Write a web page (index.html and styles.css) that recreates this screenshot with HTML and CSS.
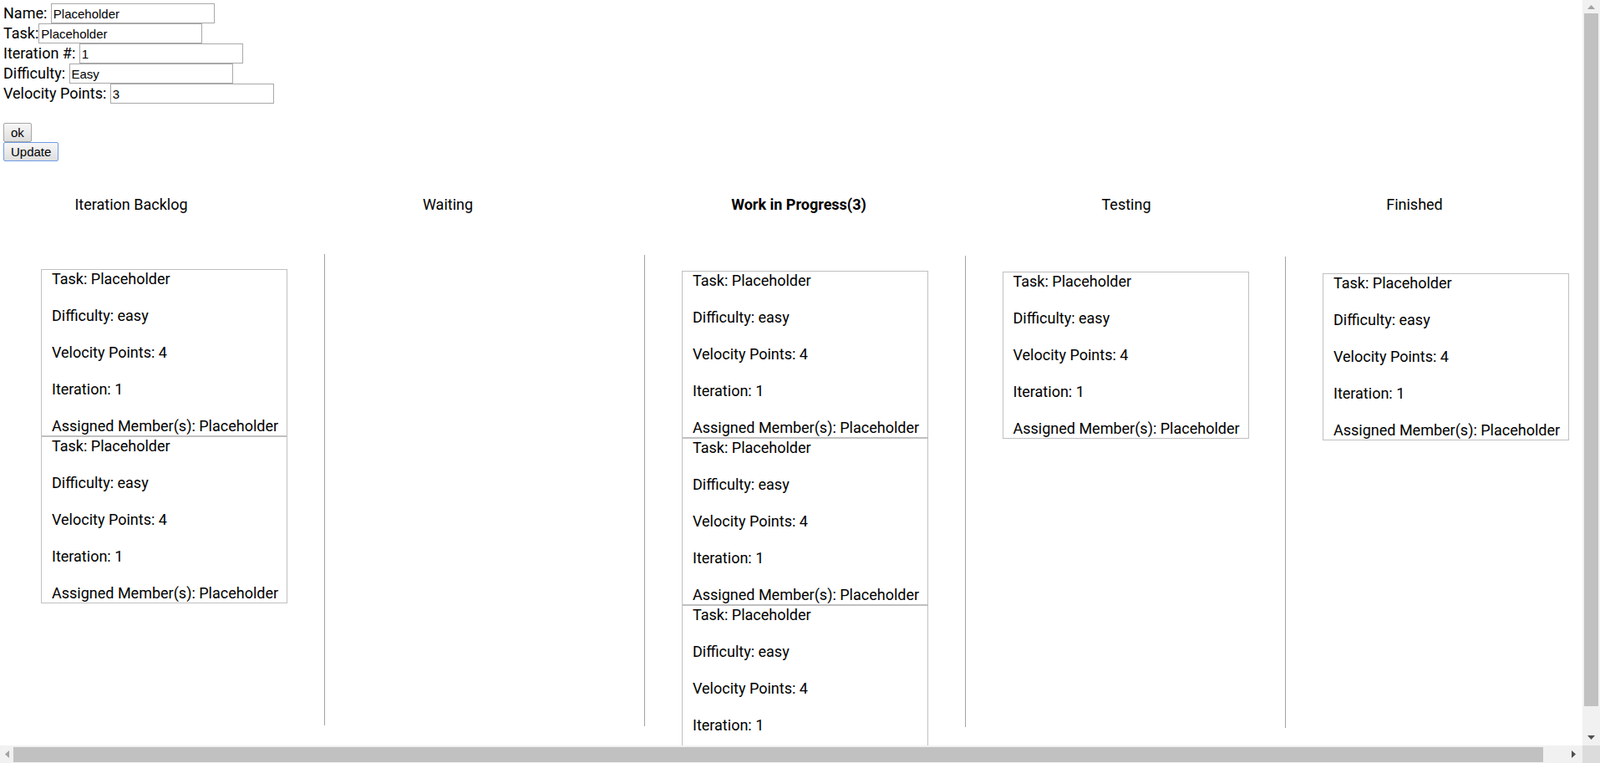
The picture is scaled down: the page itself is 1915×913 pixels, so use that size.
FILE: index.html
```html
<!DOCTYPE html>
<html>
<head>
<meta charset="utf-8">
<title>Scrum Board</title>
<link rel="stylesheet" href="styles.css">
</head>
<body>
<form class="entry">
  <div class="field">Name: <input class="text-in" type="text" value="Placeholder"></div>
  <div class="field">Task:<input class="text-in" type="text" value="Placeholder"></div>
  <div class="field">Iteration #: <input class="text-in" type="text" value="1"></div>
  <div class="field">Difficulty: <input class="text-in" type="text" value="Easy"></div>
  <div class="field">Velocity Points: <input class="text-in" type="text" value="3"></div>
  <div class="actions">
    <button class="btn" type="button">ok</button>
    <button class="btn btn-focus" type="button">Update</button>
  </div>
</form>

<div class="board-head">
  <div class="head h1">Iteration Backlog</div>
  <div class="head h2">Waiting</div>
  <div class="head h3 head-bold">Work in Progress(3)</div>
  <div class="head h4">Testing</div>
  <div class="head h5">Finished</div>
</div>

<div class="board">
  <div class="col c1">
    <div class="card">
      <div class="line">Task: Placeholder</div>
      <div class="line">Difficulty: easy</div>
      <div class="line">Velocity Points: 4</div>
      <div class="line">Iteration: 1</div>
      <div class="line">Assigned Member(s): Placeholder</div>
    </div>
    <div class="card">
      <div class="line">Task: Placeholder</div>
      <div class="line">Difficulty: easy</div>
      <div class="line">Velocity Points: 4</div>
      <div class="line">Iteration: 1</div>
      <div class="line">Assigned Member(s): Placeholder</div>
    </div>
  </div>
  <div class="col c2"></div>
  <div class="col c3">
    <div class="card">
      <div class="line">Task: Placeholder</div>
      <div class="line">Difficulty: easy</div>
      <div class="line">Velocity Points: 4</div>
      <div class="line">Iteration: 1</div>
      <div class="line">Assigned Member(s): Placeholder</div>
    </div>
    <div class="card">
      <div class="line">Task: Placeholder</div>
      <div class="line">Difficulty: easy</div>
      <div class="line">Velocity Points: 4</div>
      <div class="line">Iteration: 1</div>
      <div class="line">Assigned Member(s): Placeholder</div>
    </div>
    <div class="card">
      <div class="line">Task: Placeholder</div>
      <div class="line">Difficulty: easy</div>
      <div class="line">Velocity Points: 4</div>
      <div class="line">Iteration: 1</div>
      <div class="line">Assigned Member(s): Placeholder</div>
    </div>
  </div>
  <div class="col c4">
    <div class="card">
      <div class="line">Task: Placeholder</div>
      <div class="line">Difficulty: easy</div>
      <div class="line">Velocity Points: 4</div>
      <div class="line">Iteration: 1</div>
      <div class="line">Assigned Member(s): Placeholder</div>
    </div>
  </div>
  <div class="col c5">
    <div class="card">
      <div class="line">Task: Placeholder</div>
      <div class="line">Difficulty: easy</div>
      <div class="line">Velocity Points: 4</div>
      <div class="line">Iteration: 1</div>
      <div class="line">Assigned Member(s): Placeholder</div>
    </div>
  </div>
</div>

<div class="vscroll" aria-hidden="true">
  <div class="sb-btn sb-up">
    <svg width="9" height="5" viewBox="0 0 9 5"><polygon points="4.5,0 9,5 0,5" fill="#a3a3a3"/></svg>
  </div>
  <div class="vthumb"></div>
  <div class="sb-fill"></div>
  <div class="sb-btn sb-down">
    <svg width="9" height="5" viewBox="0 0 9 5"><polygon points="0,0 9,0 4.5,5" fill="#505050"/></svg>
  </div>
</div>
<div class="hscroll" aria-hidden="true">
  <div class="sb-btn sb-left">
    <svg width="5" height="9" viewBox="0 0 5 9"><polygon points="5,0 5,9 0,4.5" fill="#a3a3a3"/></svg>
  </div>
  <div class="hthumb"></div>
  <div class="sb-fill"></div>
  <div class="sb-btn sb-right">
    <svg width="5" height="9" viewBox="0 0 5 9"><polygon points="0,0 5,4.5 0,9" fill="#505050"/></svg>
  </div>
</div>
<div class="sb-corner" aria-hidden="true"></div>
</body>
</html>
```
FILE: styles.css
```css
html {
  overflow: hidden;
  background: #ffffff;
}
body {
  margin: 4px;
  font-family: Roboto, "Liberation Sans", sans-serif;
  font-size: 18px;
  line-height: 22px;
  color: #000;
}
.entry {
  margin: 0;
}
.field {
  height: 24px;
  display: flex;
  align-items: baseline;
  white-space: pre;
}
.text-in {
  box-sizing: border-box;
  width: 196px;
  height: 24px;
  margin: 0;
  padding: 0 2px;
  border: 1px solid #a9a9a9;
  border-radius: 0;
  font-family: "Liberation Sans", Arial, sans-serif;
  font-size: 15px;
  color: #000;
  background: #fff;
  outline: none;
}
.actions {
  margin-top: 23px;
}
.btn {
  display: block;
  box-sizing: border-box;
  height: 23px;
  margin: 0;
  padding: 0 8px;
  border: 1px solid #a6a6a6;
  border-radius: 2px;
  background: linear-gradient(#f7f7f7, #dedede);
  font-family: "Liberation Sans", Arial, sans-serif;
  font-size: 15px;
  line-height: 20px;
  color: #000;
}
.btn-focus {
  border-color: #6f9ce6;
}
.board-head {
  display: flex;
  margin-top: 41px;
}
.head {
  flex: none;
  text-align: center;
  white-space: nowrap;
}
.h1 { width: 306px; }
.h2 { width: 452px; }
.h3 { width: 388px; }
.h4 { width: 396px; }
.h5 { width: 294px; }
.head-bold {
  font-weight: bold;
}
.board {
  display: flex;
  align-items: flex-start;
  margin-top: 48px;
  padding-bottom: 56px;
}
.col {
  flex: none;
  box-sizing: border-box;
  width: 383.5px;
  height: 564px;
  border-left: 1px solid #a3a3a3;
  padding-left: 44px;
  padding-top: 18px;
}
.c1 { border-left-color: transparent; }
.c3 { margin-top: 1px; padding-top: 19px; }
.c4 { margin-top: 2px; padding-top: 19px; }
.c5 { margin-top: 3px; padding-top: 20px; width: 388px; }
.card {
  box-sizing: border-box;
  width: 295px;
  border: 1px solid #c0c0c0;
  padding: 0 8px 0 12px;
  white-space: nowrap;
}
.line + .line {
  margin-top: 22px;
}

/* scrollbars drawn over the page edge */
.vscroll {
  position: fixed;
  top: 0;
  right: 0;
  width: 21px;
  height: calc(100% - 21px);
  background: #f1f1f1;
  display: flex;
  flex-direction: column;
}
.hscroll {
  position: fixed;
  left: 0;
  bottom: 0;
  height: 21px;
  width: calc(100% - 21px);
  background: #f1f1f1;
  display: flex;
}
.sb-corner {
  position: fixed;
  right: 0;
  bottom: 0;
  width: 21px;
  height: 21px;
  background: #dcdcdc;
}
.sb-btn {
  flex: none;
  display: flex;
  align-items: center;
  justify-content: center;
}
.sb-btn svg {
  display: block;
}
.sb-up { height: 16px; }
.sb-down { height: 20px; }
.sb-left { width: 16px; }
.sb-right { width: 22px; }
.sb-fill { flex: 1; }
.vthumb {
  flex: none;
  height: 829px;
  margin: 0 2px;
  background: #c1c1c1;
}
.hthumb {
  flex: none;
  width: 1831px;
  margin: 2px 0 1px;
  background: #c1c1c1;
}
```
